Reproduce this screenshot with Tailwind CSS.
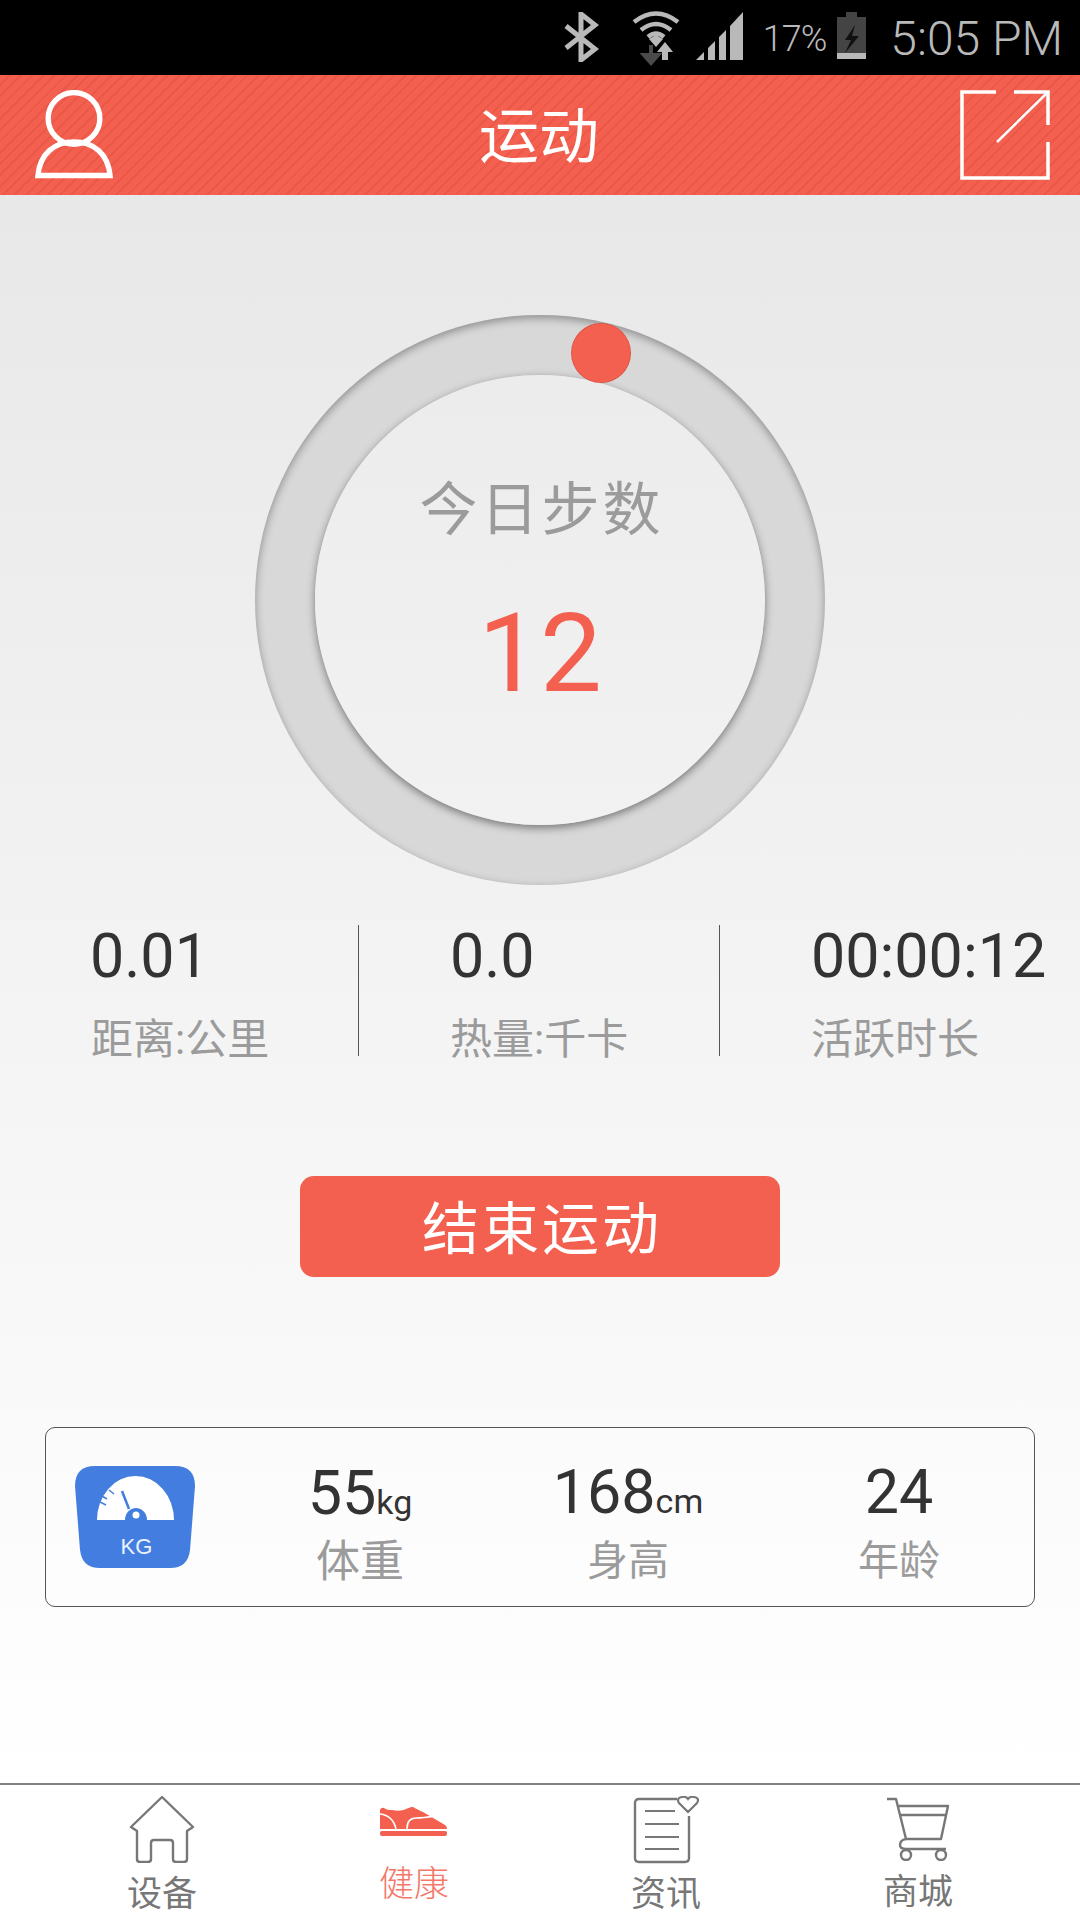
<!DOCTYPE html>
<html lang="zh">
<head>
<meta charset="utf-8">
<title>运动</title>
<script src="https://cdn.jsdelivr.net/npm/@tailwindcss/browser@4"></script>
</head>
<body class="m-0 bg-white font-['Roboto','Noto_Sans_CJK_SC',sans-serif]">
<div class="w-[1080px] h-[1920px] flex flex-col overflow-hidden">

  <!-- status bar -->
  <div class="h-[75px] bg-black flex items-center justify-end text-[#b9b9b9] shrink-0">
    <svg class="w-[36px] h-[50px] mt-[-1px]" viewBox="0 0 36 50"><path d="M3 36 L32 13 L18 2 V48 L32 37 L3 14" fill="none" stroke="#b9b9b9" stroke-width="5"/></svg>
    <svg class="ml-[32px] w-[50px] h-[56px] mt-[2px]" viewBox="0 0 50 56">
      <path d="M3 11 Q25 -6 47 11 M10 19 Q25 7 40 19 M17 26 Q25 19 33 26" fill="none" stroke="#b9b9b9" stroke-width="4.5"/>
      <path d="M25 36 L18 28 L25 24 L32 28 Z" fill="#b9b9b9"/>
      <path d="M20 34 V44 H13 L20 52 L27 44 H20" fill="#4a4a4a" stroke="#4a4a4a" stroke-width="4"/>
      <path d="M34 31 L26 41 H31 V49 H37 V41 H42 Z" fill="#b9b9b9"/>
    </svg>
    <svg class="ml-[15px] w-[48px] h-[50px] mt-[-1px]" viewBox="0 0 48 50">
      <path d="M0 48 L8 40 V48 Z M12 48 V36 L19 29 V48 Z M23 48 V25 L30 18 V48 Z M34 48 V14 L47 0 V48 Z" fill="#b9b9b9"/>
    </svg>
    <span class="ml-[19px] text-[36px] font-light tracking-[-1px] leading-none mt-[2px]">17%</span>
    <svg class="ml-[11px] w-[30px] h-[50px] mt-[-1px]" viewBox="0 0 30 50">
      <path d="M9 0 H20 V5 H29 V47 H0 V5 H9 Z" fill="#444"/>
      <rect x="0" y="41" width="29" height="6" fill="#b9b9b9"/>
      <path d="M18 13 L8 28 H14 L8 41 L22 24 H15 Z" fill="#111"/>
    </svg>
    <span class="ml-[23px] mr-[17px] text-[48px] font-light leading-none mt-[2px]">5:05 PM</span>
  </div>

  <!-- header -->
  <div class="h-[120px] shrink-0 flex items-center justify-between pl-[35px] pr-[30px] bg-[#f36050] bg-[repeating-linear-gradient(135deg,#f36050_0px,#f36050_6px,#eb5848_6px,#eb5848_8px)]">
    <svg class="w-[78px] h-[90px]" viewBox="0 0 80 92">
      <circle cx="40" cy="29" r="26.5" fill="none" stroke="#fff" stroke-width="5.5"/>
      <path d="M3 87.5 C5 65 20 53 40 53 C60 53 75 65 77 87.5 Z" fill="none" stroke="#fff" stroke-width="5.5"/>
    </svg>
    <h1 class="text-[60px] font-normal text-white leading-none mt-[6px] ml-[5px]">运动</h1>
    <svg class="w-[90px] h-[90px]" viewBox="0 0 90 90">
      <path d="M36 2 H2 V88 H88 V52 M88 35 V2 H54" fill="none" stroke="#fff" stroke-width="3.5"/>
      <path d="M37 52 L88 2" fill="none" stroke="#fff" stroke-width="2.5"/>
    </svg>
  </div>

  <!-- main -->
  <div class="flex-1 flex flex-col bg-gradient-to-b from-[#e8e8e8] to-white">

    <!-- ring -->
    <div class="relative w-[570px] h-[570px] mt-[120px] mx-auto rounded-full bg-[#d8d8d8] shadow-[inset_0_3px_8px_rgba(0,0,0,0.35)] flex items-center justify-center">
      <div class="w-[450px] h-[450px] rounded-full bg-gradient-to-b from-[#ececec] to-[#f2f2f2] shadow-[0_3px_8px_rgba(0,0,0,0.45)] flex flex-col items-center">
        <div class="text-[58px] leading-none text-[#9b9b9b] mt-[106px] tracking-[3px] ml-[3px]">今日步数</div>
        <div class="text-[110px] leading-none text-[#f36050] mt-[60px]">12</div>
      </div>
      <div class="absolute left-[316px] top-[8px] w-[60px] h-[60px] rounded-full bg-[#f36050] border border-dotted border-[#c9483a]"></div>
    </div>

    <!-- stats -->
    <div class="mt-[40px] h-[131px] flex items-stretch">
      <div class="w-[359px] pl-[90px] border-r border-[#555]">
        <div class="text-[61px] leading-none text-[#333] mt-[1px]">0.01</div>
        <div class="text-[42px] leading-none text-[#9b9b9b] mt-[32px] ml-[1px]">距离:公里</div>
      </div>
      <div class="w-[361px] pl-[91px] border-r border-[#555]">
        <div class="text-[61px] leading-none text-[#333] mt-[1px]">0.0</div>
        <div class="text-[42px] leading-none text-[#9b9b9b] mt-[32px]">热量:千卡</div>
      </div>
      <div class="flex-1 pl-[91px]">
        <div class="text-[61px] leading-none text-[#333] mt-[1px]">00:00:12</div>
        <div class="text-[42px] leading-none text-[#9b9b9b] mt-[32px]">活跃时长</div>
      </div>
    </div>

    <!-- button -->
    <div class="mt-[120px] w-[480px] h-[101px] mx-auto rounded-[14px] bg-[#f36050] flex items-center justify-center text-white text-[57px] leading-none tracking-[3px] pt-[6px] pl-[4px]">结束运动</div>

    <!-- info card -->
    <div class="mt-[150px] ml-[45px] w-[990px] h-[180px] rounded-[10px] border border-[#555] flex items-center bg-white/30">
      <div class="w-[120px] h-[102px] ml-[29px] relative shrink-0">
        <svg class="w-[120px] h-[102px]" viewBox="0 0 120 102">
          <path d="M20 0 H100 Q120 0 120 20 L115 84 Q113 102 95 102 H25 Q7 102 5 84 L0 20 Q0 0 20 0 Z" fill="#437ddf"/>
          <path d="M22 54 A38.5 44 0 0 1 99 54 Z" fill="#fff"/>
          <path d="M50 54 A11 12 0 0 1 72 54 Z" fill="#437ddf"/>
          <circle cx="61" cy="49" r="3.5" fill="#fff"/>
          <path d="M54 43 L47 25" stroke="#437ddf" stroke-width="2.5"/>
          <path d="M34 24 L39 28 M27 30 L32 33 M31 39 L25 36" stroke="#437ddf" stroke-width="1.5"/>
        </svg>
        <span class="absolute left-[3px] right-0 top-[70px] text-center text-[22px] leading-none text-white/90 font-['Liberation_Sans',sans-serif]">KG</span>
      </div>
      <div class="w-[186px] ml-[72px] mt-[12px] flex flex-col items-center">
        <div class="text-[#333] leading-none text-[61px]">55<span class="text-[34px]">kg</span></div>
        <div class="text-[#9b9b9b] text-[44px] leading-none mt-[16px]">体重</div>
      </div>
      <div class="w-[186px] ml-[82px] mt-[10px] flex flex-col items-center">
        <div class="text-[#333] leading-none text-[61px]">168<span class="text-[34px]">cm</span></div>
        <div class="text-[#9b9b9b] text-[41px] leading-none mt-[18px]">身高</div>
      </div>
      <div class="w-[186px] ml-[85px] mt-[10px] flex flex-col items-center">
        <div class="text-[#333] leading-none text-[61px]">24</div>
        <div class="text-[#9b9b9b] text-[41px] leading-none mt-[18px]">年龄</div>
      </div>
    </div>
  </div>

  <!-- tab bar -->
  <div class="h-[137px] shrink-0 bg-white border-t-2 border-[#808080] grid grid-cols-4 pl-[36px] pr-[36px]">
    <div class="flex flex-col items-center">
      <svg class="mt-[10px] w-[66px] h-[68px]" viewBox="0 0 66 68" fill="none" stroke="#777" stroke-width="2.4" stroke-linejoin="round">
        <path d="M33 2 L64 32 L58 36 V64 Q58 67 55 67 H47 Q44 67 44 64 V48 Q44 45 41 45 H25 Q22 45 22 48 V64 Q22 67 19 67 H11 Q8 67 8 64 V36 L2 32 Z"/>
      </svg>
      <span class="mt-[14px] text-[35px] leading-none text-[#777]">设备</span>
    </div>
    <div class="flex flex-col items-center">
      <svg class="mt-[21px] w-[70px] h-[32px]" viewBox="0 0 70 32">
        <path d="M1 4 Q2 1 5 2 C8 4 10 4 13 4 C18 5 23 5 27 3 C30 2 31 1 33 1 C35 1 37 3 44 6 L66 19 Q68 20 68 23 H1 Z" fill="#f36050"/>
        <path d="M1 8 C9 9 15 14 17 23 M28 23 C28 15 32 12 37 12 C44 12 50 11 56 10" fill="none" stroke="#fff" stroke-width="1.6"/>
        <rect x="1" y="25" width="67" height="5" rx="2" fill="#f36050"/>
      </svg>
      <span class="mt-[29px] text-[35px] leading-none text-[#f4786a] font-light">健康</span>
    </div>
    <div class="flex flex-col items-center">
      <svg class="mt-[11px] w-[66px] h-[68px]" viewBox="0 0 66 68" fill="none" stroke="#777" stroke-width="2.4">
        <path d="M44 3 H6 Q2 3 2 7 V62 Q2 66 6 66 H52 Q56 66 56 62 V20" stroke-linejoin="round"/>
        <path d="M12 15 H42 M12 28 H46 M12 41 H46 M12 53 H46" stroke-width="2"/>
        <path d="M55 16 L46 7 Q43 2 49 1 Q53 0 55 3 Q57 0 61 1 Q67 2 64 7 Z" stroke-width="2.2"/>
      </svg>
      <span class="mt-[13px] text-[35px] leading-none text-[#777]">资讯</span>
    </div>
    <div class="flex flex-col items-center">
      <svg class="mt-[12px] w-[64px] h-[64px]" viewBox="0 0 64 64" fill="none" stroke="#777" stroke-width="2.4" stroke-linejoin="round">
        <path d="M1 2 H10 L20 42 H55 L62 9 H12 M14 18 H60"/>
        <path d="M20 42 Q14 43 14 48 Q14 52 20 52 H60"/>
        <circle cx="20" cy="58" r="5"/>
        <circle cx="55" cy="58" r="5"/>
      </svg>
      <span class="mt-[14px] text-[35px] leading-none text-[#777]">商城</span>
    </div>
  </div>
</div>
</body>
</html>
